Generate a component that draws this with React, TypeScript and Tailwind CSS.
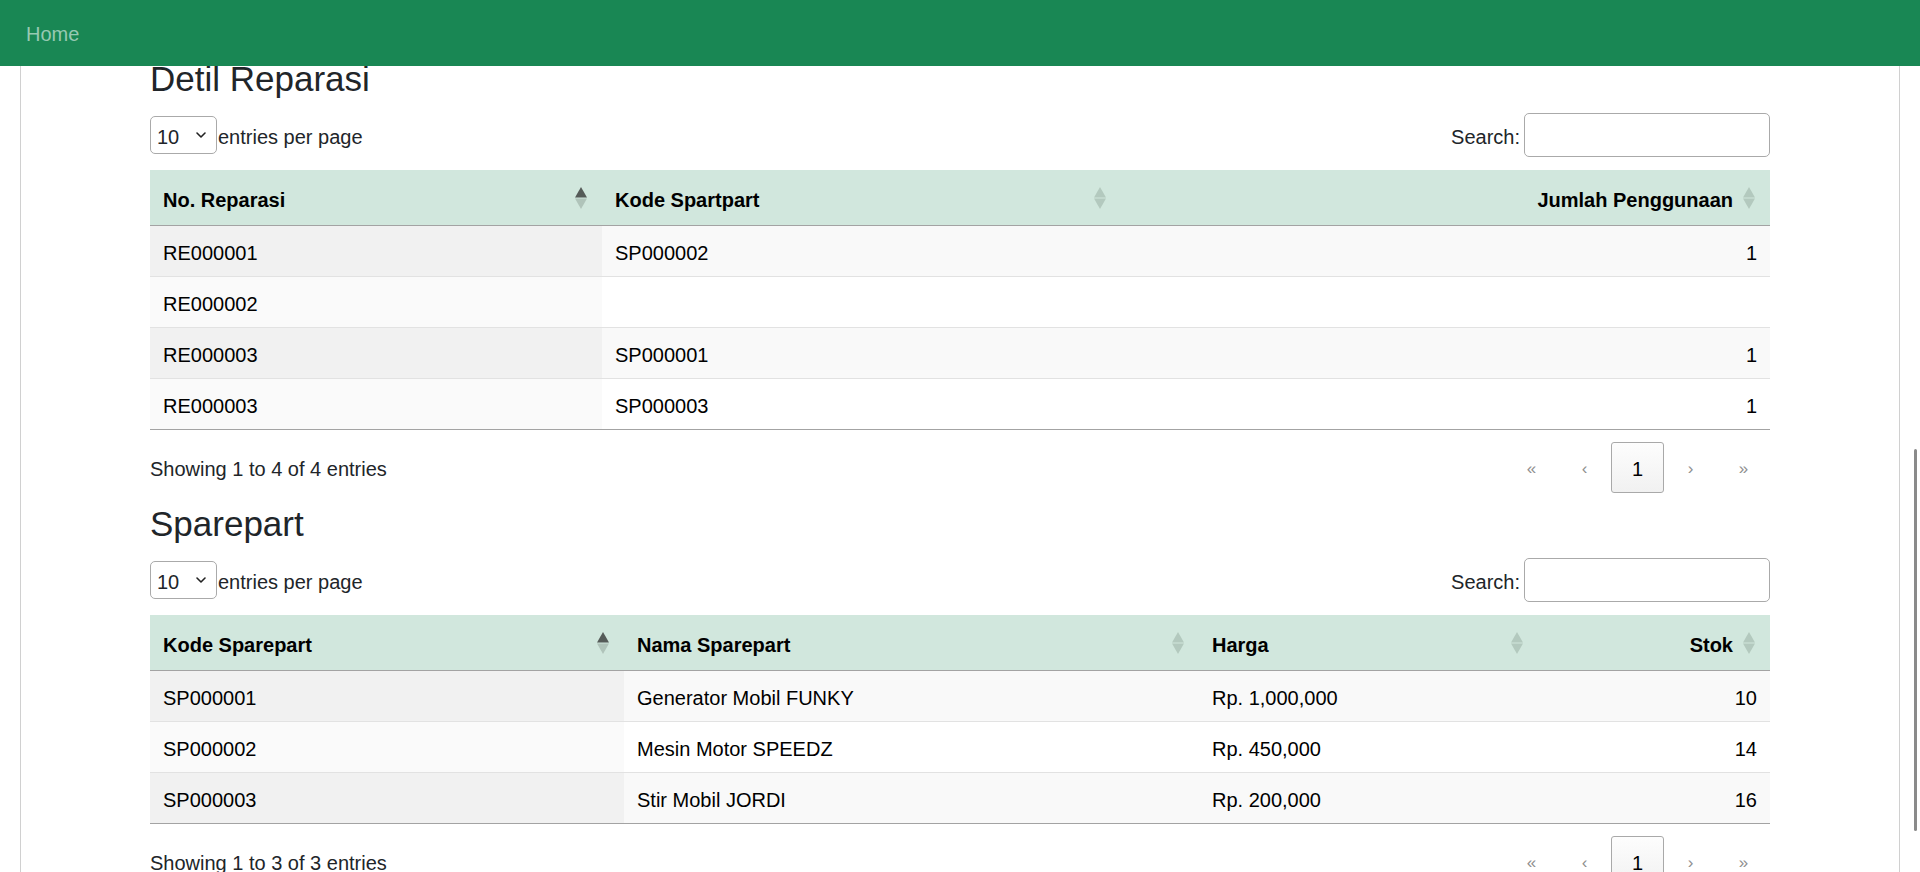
import React from "react";

type Col = {
  title: string;
  width: string;
  right?: boolean;
  sorted?: boolean;
};

const font = { fontFamily: '"Segoe UI", "Liberation Sans", Arial, sans-serif' };

function SortIcon({ active }: { active?: boolean }) {
  return (
    <svg width="12" height="22" viewBox="0 0 12 22" className="absolute right-[15px] top-1/2 -translate-y-1/2">
      <polygon points="6,0 12,10.5 0,10.5" fill={active ? "#555b58" : "#b3c9be"} />
      <polygon points="0,11.5 12,11.5 6,22" fill={active ? "#b0c4ba" : "#b3c9be"} />
    </svg>
  );
}

function Chevron() {
  return (
    <svg width="12" height="8" viewBox="0 0 12 8" fill="none">
      <path d="M2 2l4 4 4-4" stroke="#222" strokeWidth="1.6" strokeLinecap="round" strokeLinejoin="round" />
    </svg>
  );
}

function DataTable({
  cols,
  rows,
  info,
}: {
  cols: Col[];
  rows: string[][];
  info: string;
}) {
  return (
    <>
      <div className="mt-[13px] flex h-[44px] items-center justify-between">
        <div className="flex items-center">
          <div className="flex h-[38px] w-[67px] items-center justify-between rounded-[5px] border border-[#aaaaaa] pl-[6px] pr-[9px] text-[20px] text-[#212529]">
            <span className="pt-[3px]">10</span>
            <Chevron />
          </div>
          <span className="ml-[1px] pt-[3px] text-[20px] text-[#212529]">entries per page</span>
        </div>
        <div className="flex items-center">
          <span className="mr-[4px] pt-[3px] text-[20px] text-[#212529]">Search:</span>
          <div className="h-[44px] w-[246px] rounded-[5px] border border-[#aaaaaa] bg-white" />
        </div>
      </div>

      <table className="mt-[13px] w-full table-fixed text-[20px] text-[#000]">
        <thead>
          <tr className="bg-[#d1e7dd]">
            {cols.map((c) => (
              <th
                key={c.title}
                className={`relative border-b border-[#a3a3a3] pt-[15px] pb-[10px] pl-[13px] pr-[37px] font-bold leading-[30px] ${c.width} ${
                  c.right ? "text-right" : "text-left"
                }`}
              >
                {c.title}
                <SortIcon active={c.sorted} />
              </th>
            ))}
          </tr>
        </thead>
        <tbody>
          {rows.map((r, i) => {
            const odd = i % 2 === 0;
            const last = i === rows.length - 1;
            return (
              <tr key={i}>
                {r.map((v, j) => (
                  <td
                    key={j}
                    className={`border-b pt-[12px] pb-[8px] leading-[30px] ${
                      last ? "border-[#a3a3a3]" : "border-[#e2e2e2]"
                    } ${
                      j === 0
                        ? odd
                          ? "bg-[#f1f1f1]"
                          : "bg-[#fafafa]"
                        : odd
                        ? "bg-[#f9f9f9]"
                        : "bg-white"
                    } ${cols[j].right ? "pr-[13px] text-right" : "pl-[13px] text-left"}`}
                  >
                    {v}
                  </td>
                ))}
              </tr>
            );
          })}
        </tbody>
      </table>

      <div className="mt-[12px] flex h-[51px] items-center justify-between">
        <span className="pt-[2px] text-[20px] text-[#212529]">{info}</span>
        <div className="flex items-center">
          <span className="flex h-[51px] w-[53px] items-center justify-center pt-[2px] text-[17px] text-[#8f8f8f]">«</span>
          <span className="flex h-[51px] w-[53px] items-center justify-center pt-[2px] text-[17px] text-[#8f8f8f]">‹</span>
          <span className="flex h-[51px] w-[53px] items-center justify-center rounded-[3px] border border-[#a9a9a9] bg-gradient-to-b from-[#fdfdfd] to-[#f1f1f1] pt-[2px] text-[20px] text-[#000]">
            1
          </span>
          <span className="flex h-[51px] w-[53px] items-center justify-center pt-[2px] text-[17px] text-[#8f8f8f]">›</span>
          <span className="flex h-[51px] w-[53px] items-center justify-center pt-[2px] text-[17px] text-[#8f8f8f]">»</span>
        </div>
      </div>
    </>
  );
}

export default function App() {
  return (
    <div className="relative min-h-screen bg-white" style={font}>
      <nav className="fixed inset-x-0 top-0 z-10 flex h-[66px] items-center bg-[#198754] px-[26px]">
        <span className="pt-[2px] text-[20px] text-[#97c9b2]">Home</span>
      </nav>

      <div className="mx-[20px] min-h-screen border-x border-[#d0d0d0]">
        <div className="mx-auto w-[1620px] pt-[58px] pb-[40px]">
          <h3 className="h-[42px] text-[35px] font-medium leading-[42px] text-[#212529]">Detil Reparasi</h3>
          <DataTable
            cols={[
              { title: "No. Reparasi", width: "w-[452px]", sorted: true },
              { title: "Kode Spartpart", width: "w-[519px]" },
              { title: "Jumlah Penggunaan", width: "w-auto", right: true },
            ]}
            rows={[
              ["RE000001", "SP000002", "1"],
              ["RE000002", "", ""],
              ["RE000003", "SP000001", "1"],
              ["RE000003", "SP000003", "1"],
            ]}
            info="Showing 1 to 4 of 4 entries"
          />

          <h3 className="mt-[10px] h-[42px] text-[35px] font-medium leading-[42px] text-[#212529]">Sparepart</h3>
          <DataTable
            cols={[
              { title: "Kode Sparepart", width: "w-[474px]", sorted: true },
              { title: "Nama Sparepart", width: "w-[575px]" },
              { title: "Harga", width: "w-[339px]" },
              { title: "Stok", width: "w-auto", right: true },
            ]}
            rows={[
              ["SP000001", "Generator Mobil FUNKY", "Rp. 1,000,000", "10"],
              ["SP000002", "Mesin Motor SPEEDZ", "Rp. 450,000", "14"],
              ["SP000003", "Stir Mobil JORDI", "Rp. 200,000", "16"],
            ]}
            info="Showing 1 to 3 of 3 entries"
          />
        </div>
      </div>

      <div className="fixed right-[3px] top-[449px] z-20 h-[382px] w-[3px] rounded-full bg-[#8a8a8a]" />
    </div>
  );
}
